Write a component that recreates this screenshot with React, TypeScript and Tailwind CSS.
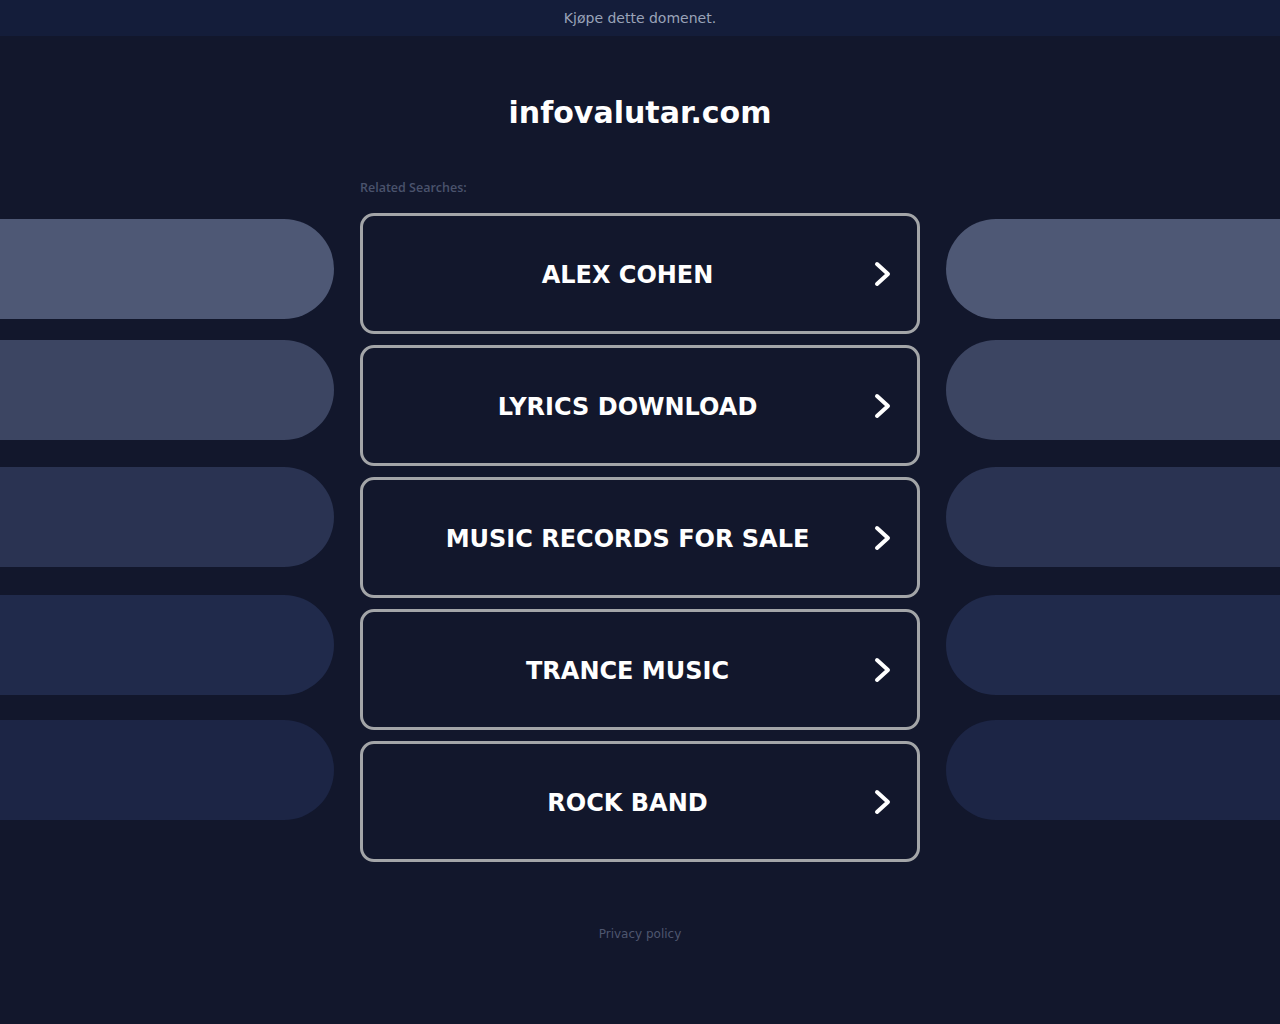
import React from "react";

const items = ["ALEX COHEN", "LYRICS DOWNLOAD", "MUSIC RECORDS FOR SALE", "TRANCE MUSIC", "ROCK BAND"];

const pills = [
  { c: "bg-[#4e5875]", mt: "mt-0" },
  { c: "bg-[#3c4562]", mt: "mt-[21px]" },
  { c: "bg-[#2a3352]", mt: "mt-[27px]" },
  { c: "bg-[#202a4b]", mt: "mt-[28px]" },
  { c: "bg-[#1c2545]", mt: "mt-[25px]" },
];

function Chevron() {
  return (
    <svg width="22" height="30" viewBox="0 0 22 30" className="shrink-0">
      <path d="M5 5 L16 15 L5 25" fill="none" stroke="#ffffff" strokeWidth="4" strokeLinecap="round" strokeLinejoin="round" />
    </svg>
  );
}

export default function App() {
  return (
    <div className="w-[1280px] h-[1024px] bg-[#12172c] relative overflow-hidden" style={{ fontFamily: '"DejaVu Sans", sans-serif' }}>
      <div className="h-[36px] bg-[#141d3a] flex items-center justify-center text-[14px] text-[#9aa3b8]">
        Kjøpe dette domenet.
      </div>

      {/* side pills */}
      <div className="absolute left-0 top-[219px] flex flex-col">
        {pills.map((p, i) => (
          <div key={i} className={`w-[334px] h-[100px] rounded-r-[50px] ${p.c} ${p.mt}`} />
        ))}
      </div>
      <div className="absolute left-[946px] top-[219px] flex flex-col">
        {pills.map((p, i) => (
          <div key={i} className={`w-[334px] h-[100px] rounded-l-[50px] ${p.c} ${p.mt}`} />
        ))}
      </div>

      <div className="flex flex-col items-center">
        <h1 className="mt-[58px] text-[30px] leading-[38px] font-bold text-white">infovalutar.com</h1>
        <div className="w-[560px] mt-[48px]">
          <div className="text-[12.5px] leading-[16px] font-semibold text-[#4a536c]" style={{ fontFamily: '"Open Sans", sans-serif' }}>
            Related Searches:
          </div>
          <div className="mt-[17px] flex flex-col gap-[11px]">
            {items.map((t) => (
              <div
                key={t}
                className="h-[121px] rounded-[14px] border-[3px] border-[#a3a5a8] bg-[#12172c] flex items-center pl-[23px] pr-[23px]"
              >
                <div className="flex-1 text-center text-[24px] font-bold text-white pt-[3px] pr-[3px]">{t}</div>
                <Chevron />
              </div>
            ))}
          </div>
        </div>
        <div className="mt-[63px] text-[12px] text-[#4e566f]">Privacy policy</div>
      </div>
    </div>
  );
}
